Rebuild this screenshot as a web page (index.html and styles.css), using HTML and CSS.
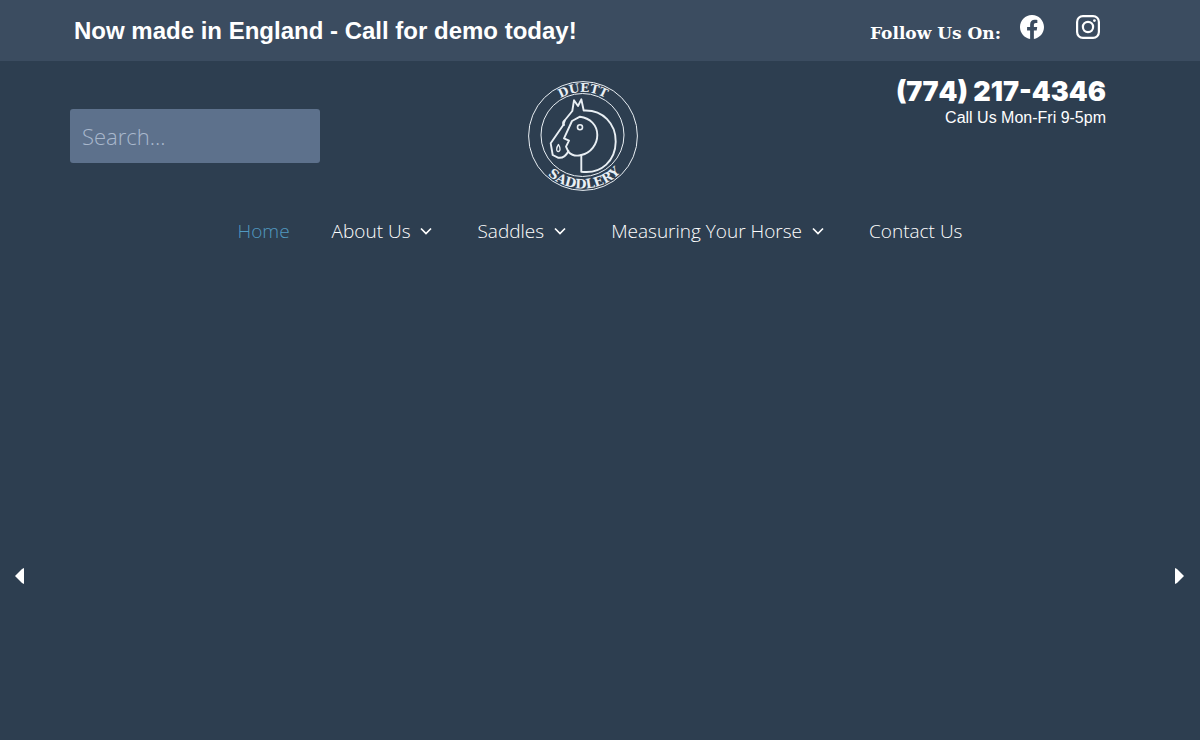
FILE: index.html
```html
<!DOCTYPE html>
<html lang="en">
<head>
<meta charset="utf-8">
<meta name="viewport" content="width=device-width, initial-scale=1">
<title>Duett Saddlery</title>
<link rel="stylesheet" href="styles.css">
</head>
<body>
<div class="topbar">
  <p class="notice">Now made in England - Call for demo today!</p>
  <div class="social">
    <span class="social-label">Follow Us On:</span>
    <a class="social-link" href="#facebook" aria-label="Facebook">
      <svg viewBox="0 0 16 16" width="24" height="24" fill="currentColor" aria-hidden="true"><path d="M16 8.049c0-4.446-3.582-8.05-8-8.05C3.58 0-.002 3.603-.002 8.05c0 4.017 2.926 7.347 6.75 7.951v-5.625h-2.03V8.05H6.75V6.275c0-2.017 1.195-3.131 3.022-3.131.876 0 1.791.157 1.791.157v1.98h-1.009c-.993 0-1.303.621-1.303 1.258v1.51h2.218l-.354 2.326H9.25V16c3.824-.604 6.75-3.934 6.75-7.951"/></svg>
    </a>
    <a class="social-link" href="#instagram" aria-label="Instagram">
      <svg viewBox="0 0 24 24" width="24" height="24" fill="none" stroke="currentColor" stroke-width="2.2" aria-hidden="true"><rect x="1.1" y="1.1" width="21.8" height="21.8" rx="5.8"/><circle cx="12" cy="12" r="5.1"/><circle cx="18.4" cy="5.6" r="1.4" fill="currentColor" stroke="none"/></svg>
    </a>
  </div>
</div>
<header class="header">
  <form class="search" role="search">
    <input class="search-input" type="search" placeholder="Search..." aria-label="Search">
  </form>
  <a class="logo" href="#home" aria-label="Duett Saddlery">
    <svg class="logo-mark" viewBox="0 0 110 110" width="110" height="110" fill="none" stroke="currentColor">
      <defs>
        <path id="ring-top" d="M11 55a44 44 0 0 1 88 0"/>
        <path id="ring-bottom" d="M2.500 55a52.500 52.500 0 0 0 105 0"/>
      </defs>
      <circle cx="55" cy="55" r="54.4"/>
      <circle cx="54.5" cy="54" r="41.5"/>
      <text class="logo-text"><textPath href="#ring-top" startOffset="50%">DUETT</textPath></text>
      <text class="logo-text logo-text-lower"><textPath href="#ring-bottom" startOffset="51%">SADDLERY</textPath></text>
      <g stroke-width="1.9" stroke-linejoin="round" stroke-linecap="round">
        <path d="M40.500 70C38.500 74 35 77.500 30 76.700L24.700 74L22.700 62.300L35.300 44L37 39L44.300 30L46 19.300L50 25L53.300 18.300L55.700 29.500C75 28.500 88 43 87.700 60.700C87.500 79 74 93.500 53.300 90.700V74"/>
        <path d="M52 35.700L44 40L36 57.300L41 59.700L38 65.700L40.500 71C44 74.500 48 75.500 53.300 74C63 72 69.300 63 69.300 54C69.300 44 62 37 52 35.700Z"/>
        <path d="M36.500 39.500C34.500 41 34.800 43.500 36 44"/>
        <circle cx="52" cy="46.300" r="2.500" stroke-width="1.600"/>
        <path d="M30.500 63.500C28 67 28.200 70.500 30.200 70.500C32.500 70.500 32.700 67 30.500 63.500Z" stroke-width="1.300"/>
      </g>
    </svg>
  </a>
  <div class="contact">
    <a class="phone" href="tel:+17742174346">(774) 217-4346</a>
    <span class="hours">Call Us Mon-Fri 9-5pm</span>
  </div>
</header>
<nav class="nav" aria-label="Main">
  <a class="nav-link current" href="#home">Home</a>
  <a class="nav-link" href="#about">About Us <svg class="chevron" viewBox="0 0 12 8" aria-hidden="true"><path d="M1 1.500L6 6.500L11 1.500"/></svg></a>
  <a class="nav-link" href="#saddles">Saddles <svg class="chevron" viewBox="0 0 12 8" aria-hidden="true"><path d="M1 1.500L6 6.500L11 1.500"/></svg></a>
  <a class="nav-link" href="#measuring">Measuring Your Horse <svg class="chevron" viewBox="0 0 12 8" aria-hidden="true"><path d="M1 1.500L6 6.500L11 1.500"/></svg></a>
  <a class="nav-link" href="#contact">Contact Us</a>
</nav>
<main class="slider">
  <button class="arrow" type="button" aria-label="Previous slide"><svg viewBox="0 0 10 16" width="10" height="16" fill="currentColor"><path d="M9 0V16L7 15L0 8L7 1Z"/></svg></button>
  <button class="arrow" type="button" aria-label="Next slide"><svg viewBox="0 0 10 16" width="10" height="16" fill="currentColor"><path d="M0 0V16L2 15L9 8L2 1Z"/></svg></button>
</main>
</body>
</html>
```
FILE: styles.css
```css
* { box-sizing: border-box; }

body {
  margin: 0;
  min-height: 100vh;
  display: flex;
  flex-direction: column;
  background: #2d3e50;
  color: #fff;
  font-family: "Liberation Sans", Arial, sans-serif;
}

a { color: inherit; text-decoration: none; }
svg { display: block; }

.topbar {
  display: flex;
  justify-content: space-between;
  align-items: center;
  min-height: 61px;
  padding: 0 100px 0 74px;
  background: #3b4c60;
}

.notice { margin: 0; font-size: 24px; font-weight: 700; line-height: 28px; }

.social { display: flex; align-items: center; }
.social-label {
  padding-top: 4px;
  font: 700 17px/24px "DejaVu Serif", serif;
}
.social-link { padding-bottom: 8px; margin-left: 19px; }
.social-link + .social-link { margin-left: 32px; }

.header {
  display: grid;
  grid-template-columns: 1fr auto 1fr;
  padding: 20px 94px 0 70px;
}

.search { padding-top: 28px; }
.search-input {
  display: block;
  width: 250px;
  height: 54px;
  padding: 0 12px;
  border: 0;
  border-radius: 3px;
  background: #5d718c;
  color: #fff;
  font: 300 22px "Open Sans", sans-serif;
  appearance: none;
}
.search-input::placeholder { color: #a9b8cc; opacity: 1; }

.logo { margin-right: 10px; color: #e9eff4; }
.logo-mark { overflow: visible; }
.logo-text {
  fill: currentColor;
  stroke: none;
  font: 700 12px "DejaVu Serif", serif;
  text-anchor: middle;
}
.logo-text-lower { font-size: 13px; }

.contact { display: flex; flex-direction: column; align-items: flex-end; }
.phone {
  margin-top: -2px;
  font: 900 27px/26px Inter, sans-serif;
  font-kerning: none;
}
.hours { font-size: 16px; line-height: 26px; }

.nav {
  display: flex;
  justify-content: center;
  gap: 42px;
  padding-top: 26px;
  font: 300 19px/28px "Open Sans", sans-serif;
}
.nav-link { display: flex; align-items: center; gap: 10px; }
.current { color: #5199c0; }
.chevron {
  width: 12px;
  height: 8px;
  margin-right: 3px;
  fill: none;
  stroke: currentColor;
  stroke-width: 1.7;
}

.slider {
  flex: 1;
  display: flex;
  justify-content: space-between;
  align-items: center;
  padding: 166px 10px 0;
}
.arrow {
  padding: 5px;
  border: 0;
  background: none;
  color: #fff;
}
```
